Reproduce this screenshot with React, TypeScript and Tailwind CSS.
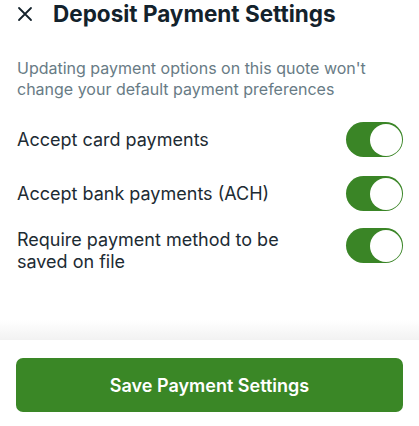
export default function App() {
  const rows = [
    { label: 'Accept card payments' },
    { label: 'Accept bank payments (ACH)' },
  ];

  return (
    <div className="w-[419px] h-[426px] bg-white flex flex-col font-['Inter',sans-serif] overflow-hidden">
      {/* header */}
      <div className="flex items-center h-[27px] pl-[17px]">
        <svg width="16" height="16" viewBox="0 0 16 16" className="text-[#14222c]">
          <path d="M2 2L14 14M14 2L2 14" stroke="currentColor" strokeWidth="1.8" strokeLinecap="round" />
        </svg>
        <h1 className="ml-[20px] text-[22.5px] leading-[27px] font-bold text-[#13222c]">Deposit Payment Settings</h1>
      </div>

      <div className="flex-1 px-4">
        <p className="mt-[31px] pl-px text-[16px] leading-[21px] text-[#687b85]">
          Updating payment options on this quote won't change your default payment preferences
        </p>

        {rows.map((r, i) => (
          <div key={r.label} className={`flex items-center justify-between h-[35px] ${i === 0 ? 'mt-[22px]' : 'mt-[19px]'}`}>
            <span className="pl-px text-[18px] leading-[22px] text-[#1d2b33]">{r.label}</span>
            <Toggle />
          </div>
        ))}

        <div className="flex items-start justify-between mt-[17px]">
          <span className="pl-px pt-px w-[290px] text-[18px] leading-[22px] text-[#1d2b33]">
            Require payment method to be saved on file
          </span>
          <Toggle />
        </div>
      </div>

      {/* footer */}
      <div className="h-5 bg-gradient-to-b from-white to-[#f2f2f2]" />
      <div className="px-4 pt-[18px] pb-[14px]">
        <button className="w-full h-[54px] rounded-[7px] bg-[#3a8726] text-white text-[18px] font-semibold">
          Save Payment Settings
        </button>
      </div>
    </div>
  );
}

function Toggle() {
  return (
    <div className="w-[57px] h-[35px] rounded-full bg-[#3a8526] p-[1.5px] flex justify-end shrink-0">
      <div className="w-8 h-8 rounded-full bg-white" />
    </div>
  );
}
